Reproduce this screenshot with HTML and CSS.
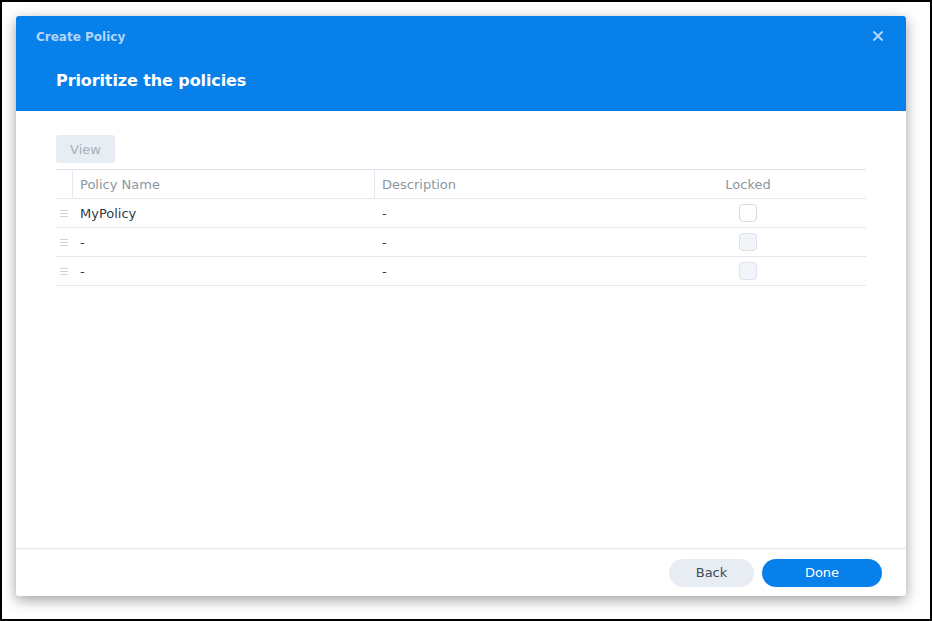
FILE: index.html
```html
<!DOCTYPE html>
<html>
<head>
<meta charset="utf-8">
<link rel="stylesheet" href="styles.css">
</head>
<body>
<div class="frame">
  <div class="dialog">
    <div class="header">
      <div class="titlebar">
        <span class="title">Create Policy</span>
        <svg class="close" width="12" height="12" viewBox="0 0 12 12"><path d="M1.5 1.5 L10.5 10.5 M10.5 1.5 L1.5 10.5" stroke="currentColor" stroke-width="2" fill="none"/></svg>
      </div>
      <div class="subtitle">Prioritize the policies</div>
    </div>
    <div class="content">
      <div class="toolbar"><button class="btn-view">View</button></div>
      <div class="grid">
        <div class="row head">
          <div class="c handle"></div>
          <div class="c name sep">Policy Name</div>
          <div class="c desc sep">Description</div>
          <div class="c locked">Locked</div>
        </div>
        <div class="row">
          <div class="c handle"><span class="grip"></span></div>
          <div class="c name">MyPolicy</div>
          <div class="c desc">-</div>
          <div class="c locked"><span class="cb"></span></div>
        </div>
        <div class="row">
          <div class="c handle"><span class="grip"></span></div>
          <div class="c name">-</div>
          <div class="c desc">-</div>
          <div class="c locked"><span class="cb disabled"></span></div>
        </div>
        <div class="row">
          <div class="c handle"><span class="grip"></span></div>
          <div class="c name">-</div>
          <div class="c desc">-</div>
          <div class="c locked"><span class="cb disabled"></span></div>
        </div>
      </div>
    </div>
    <div class="footer">
      <button class="btn back">Back</button>
      <button class="btn done">Done</button>
    </div>
  </div>
</div>
</body>
</html>
```
FILE: styles.css
```css
html, body {
  margin: 0;
  padding: 0;
  background: #fff;
}
body {
  font-family: "DejaVu Sans", Verdana, sans-serif;
  font-size: 13px;
}
.frame {
  width: 932px;
  height: 621px;
  box-sizing: border-box;
  border: 2px solid #000;
  padding: 14px 24px 23px 14px;
  background: #fff;
}
.dialog {
  width: 890px;
  height: 580px;
  background: #fff;
  border-radius: 3px;
  box-shadow: 0 4px 14px rgba(0, 0, 0, 0.38);
  display: flex;
  flex-direction: column;
  overflow: hidden;
}
.header {
  background: #0780ea;
  height: 95px;
  flex: none;
}
.titlebar {
  height: 42px;
  display: flex;
  align-items: center;
  justify-content: space-between;
  padding: 0 22px 0 20px;
}
.title {
  font-size: 12px;
  font-weight: bold;
  color: #b3d5f8;
}
.close {
  color: #b3d5f8;
  margin-top: -2px;
}
.subtitle {
  padding: 11px 40px 0;
  line-height: 24px;
  font-size: 16px;
  font-weight: bold;
  letter-spacing: -0.1px;
  color: #fff;
}
.content {
  flex: 1;
  padding: 24px 40px 0;
}
.toolbar {
  height: 28px;
  margin-bottom: 6px;
}
.btn-view {
  font-family: inherit;
  font-size: 13px;
  width: 59px;
  height: 28px;
  border: none;
  border-radius: 3px;
  background: #e8edf4;
  color: #a6afb9;
  padding: 0;
}
.grid {
  border-top: 1px solid #dde4eb;
}
.row {
  display: grid;
  grid-template-columns: 16px 302px 256px 236px;
  height: 28px;
  border-bottom: 1px solid #e4e9ef;
  color: #323c47;
}
.row.head {
  color: #8c96a0;
}
.c {
  display: flex;
  align-items: center;
  padding: 0 8px;
  white-space: nowrap;
}
.c.handle {
  padding: 0;
  justify-content: center;
}
.head .c.name {
  border-left: 1px solid #e2e8ee;
  padding-left: 7px;
}
.head .c.desc {
  border-left: 1px solid #e2e8ee;
  padding-left: 7px;
}
.c.locked {
  justify-content: center;
}
.grip {
  width: 8px;
  height: 7px;
  border-top: 1px solid #cbd3dc;
  border-bottom: 1px solid #cbd3dc;
  box-sizing: border-box;
  position: relative;
}
.grip::after {
  content: "";
  position: absolute;
  left: 0;
  right: 0;
  top: 2px;
  height: 1px;
  background: #cbd3dc;
}
.cb {
  width: 18px;
  height: 18px;
  box-sizing: border-box;
  border: 1px solid #d3dae2;
  border-radius: 4px;
  background: #fff;
}
.cb.disabled {
  background: #f1f4f8;
  border-color: #dde3ea;
}
.footer {
  flex: none;
  height: 47px;
  border-top: 1px solid #e1e7ed;
  display: flex;
  align-items: center;
  justify-content: flex-end;
  gap: 8px;
  padding: 0 24px;
}
.btn {
  font-family: inherit;
  font-size: 13px;
  height: 28px;
  border: none;
  border-radius: 14px;
  padding: 0;
}
.btn.back {
  width: 85px;
  background: #e8edf4;
  color: #414b56;
}
.btn.done {
  width: 120px;
  background: #0780ea;
  color: #fff;
}
```
